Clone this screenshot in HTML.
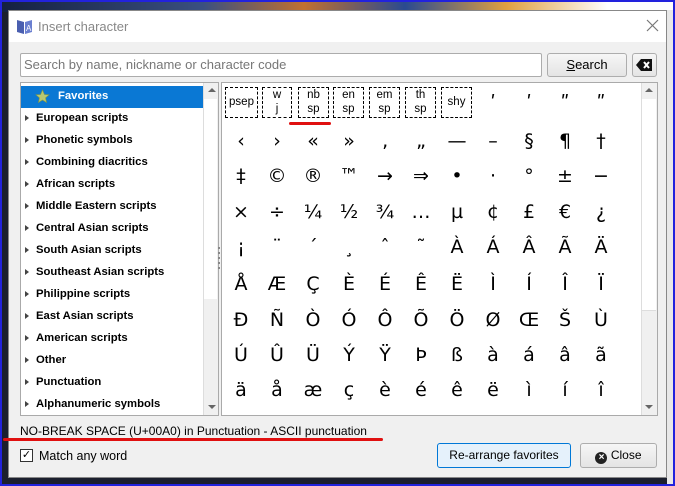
<!DOCTYPE html>
<html><head><meta charset="utf-8"><style>
*{box-sizing:border-box;margin:0;padding:0}
body{width:675px;height:486px;overflow:hidden;position:relative;background:#1b1f2e;font-family:"Liberation Sans","DejaVu Sans",sans-serif;font-size:12px;color:#000}
.frame{position:absolute;left:0;top:0;width:675px;height:486px;border:2px solid #2222dd;z-index:10;pointer-events:none}
.wall{position:absolute;left:0;top:0;width:675px;height:12px;background:linear-gradient(90deg,#142040,#3a5080 30%,#c07030 45%,#2a4a90 60%,#e0a040 75%,#ffffff 90%)}
.rightapp{position:absolute;left:667px;top:10px;width:8px;height:476px;background:#e8e8e8}
.dlg{position:absolute;left:8px;top:10px;width:659px;height:468px;background:#f0f0f0;border:1px solid #888}
.title{position:absolute;left:0;top:0;width:657px;height:31px;background:#fff}
.title span{position:absolute;left:29px;top:8px;font-size:13px;color:#888}
.abs{position:absolute}
.inp{left:11px;top:42px;width:522px;height:24px;background:#fff;border:1px solid #acacac;border-radius:2px;color:#777;font-size:13px;padding:3px 3px}
.btn{background:linear-gradient(#f6f6f6,#e4e4e4);border:1px solid #adadad;border-radius:3px;text-align:center;font-size:12px}
.list{left:11px;top:71px;width:199px;height:334px;background:#fff;border:1px solid #aaa}
.li{position:absolute;left:15px;font-weight:bold;font-size:11.3px}
.tri{position:absolute;left:4px;width:0;height:0;border-left:4px solid #444;border-top:3.5px solid transparent;border-bottom:3.5px solid transparent}
.sb{background:#f0f0f0;border-left:1px solid #ddd}
.grid{left:212px;top:71px;width:437px;height:334px;background:#fff;border:1px solid #aaa}
.c{position:absolute;width:36px;text-align:center;font-family:"DejaVu Sans","Liberation Sans",sans-serif;font-size:19px;line-height:20px}
.bx{position:absolute;border:1px dashed #000;font-size:11.5px;text-align:center;line-height:14px;font-family:"Liberation Sans",sans-serif}
</style></head><body>
<div class="wall"></div>
<div class="rightapp"></div>
<div class="dlg">
 <div class="title">
  <svg class="abs" style="left:7px;top:7px" width="17" height="17" viewBox="0 0 17 17"><path d="M1 2 L8 4 L8 16 L1 14Z" fill="#4a5fb0"/><path d="M9 4 L16 2 L16 14 L9 16Z" fill="#6a7fd0"/><text x="10" y="13" font-size="8" fill="#fff" font-family="Liberation Sans">A</text></svg>
  <span>Insert character</span>
  <svg class="abs" style="left:637px;top:8px" width="13" height="13"><path d="M1 1L12 12M12 1L1 12" stroke="#777" stroke-width="1.2"/></svg>
 </div>
 <div class="abs inp">Search by name, nickname or character code</div>
 <div class="abs btn" style="left:538px;top:42px;width:80px;height:24px;line-height:22px;font-size:13px"><u>S</u>earch</div>
 <div class="abs btn" style="left:623px;top:42px;width:25px;height:24px"><svg width="17" height="12" style="margin-top:5px" viewBox="0 0 17 12"><path d="M5 0H16V12H5L0 6Z" fill="#111"/><path d="M8 3L13 9M13 3L8 9" stroke="#fff" stroke-width="2"/></svg></div>
 <div class="abs list">
  <div class="abs" style="left:0;top:3px;width:182px;height:22px;background:#0a78d4"></div>
  <svg class="abs" style="left:14px;top:6px" width="15" height="15" viewBox="0 0 15 15"><path d="M7.5 1L9.4 5.5L14 5.8L10.5 8.9L11.6 13.5L7.5 11L3.4 13.5L4.5 8.9L1 5.8L5.6 5.5Z" fill="#b8c870" stroke="#8a9a40" stroke-width=".6"/></svg>
  <div class="li" style="left:37px;top:7px;color:#fff">Favorites</div>
  <div class="tri" style="top:32px"></div><div class="li" style="top:29px">European scripts</div>
  <div class="tri" style="top:54px"></div><div class="li" style="top:51px">Phonetic symbols</div>
  <div class="tri" style="top:76px"></div><div class="li" style="top:73px">Combining diacritics</div>
  <div class="tri" style="top:98px"></div><div class="li" style="top:95px">African scripts</div>
  <div class="tri" style="top:120px"></div><div class="li" style="top:117px">Middle Eastern scripts</div>
  <div class="tri" style="top:142px"></div><div class="li" style="top:139px">Central Asian scripts</div>
  <div class="tri" style="top:164px"></div><div class="li" style="top:161px">South Asian scripts</div>
  <div class="tri" style="top:186px"></div><div class="li" style="top:183px">Southeast Asian scripts</div>
  <div class="tri" style="top:208px"></div><div class="li" style="top:205px">Philippine scripts</div>
  <div class="tri" style="top:230px"></div><div class="li" style="top:227px">East Asian scripts</div>
  <div class="tri" style="top:252px"></div><div class="li" style="top:249px">American scripts</div>
  <div class="tri" style="top:274px"></div><div class="li" style="top:271px">Other</div>
  <div class="tri" style="top:296px"></div><div class="li" style="top:293px">Punctuation</div>
  <div class="tri" style="top:318px"></div><div class="li" style="top:315px">Alphanumeric symbols</div>
  <div class="abs sb" style="left:182px;top:0;width:15px;height:332px"></div>
  <div class="abs" style="left:183px;top:16px;width:13px;height:200px;background:#fff"></div>
  <div class="abs" style="left:187px;top:5px;border-left:4px solid transparent;border-right:4px solid transparent;border-bottom:4px solid #666"></div>
  <div class="abs" style="left:187px;top:322px;border-left:4px solid transparent;border-right:4px solid transparent;border-top:4px solid #666"></div>
 </div>
 <div class="abs" style="left:209px;top:236px;width:2px;height:22px;background:repeating-linear-gradient(#888 0 2px,transparent 2px 5px)"></div>
 <div class="abs grid">
  <div class="bx" style="left:3px;top:4px;width:33px;height:31px;line-height:29px">psep</div>
  <div class="bx" style="left:40px;top:4px;width:30px;height:31px">w<br>j</div>
  <div class="bx" style="left:76px;top:4px;width:31px;height:31px">nb<br>sp</div>
  <div class="bx" style="left:111px;top:4px;width:31px;height:31px">en<br>sp</div>
  <div class="bx" style="left:147px;top:4px;width:31px;height:31px">em<br>sp</div>
  <div class="bx" style="left:183px;top:4px;width:31px;height:31px">th<br>sp</div>
  <div class="bx" style="left:219px;top:4px;width:31px;height:31px;line-height:29px">shy</div>
  <div id="g"></div>
  <div class="abs sb" style="left:419px;top:0;width:16px;height:332px"></div>
  <div class="abs" style="left:420px;top:16px;width:14px;height:212px;background:#fff;border-bottom:1px solid #ddd"></div>
  <div class="abs" style="left:423px;top:5px;border-left:4px solid transparent;border-right:4px solid transparent;border-bottom:4px solid #666"></div>
  <div class="abs" style="left:423px;top:322px;border-left:4px solid transparent;border-right:4px solid transparent;border-top:4px solid #666"></div>
 </div>
 <div class="abs" style="left:11px;top:413px;font-size:12px">NO-BREAK SPACE (U+00A0) in Punctuation - ASCII punctuation</div>
 <div class="abs" style="left:11px;top:438px;width:13px;height:13px;border:1px solid #333;background:#fff;font-size:11px;line-height:11px;text-align:center;font-weight:bold">✓</div>
 <div class="abs" style="left:30px;top:438px;font-size:12.5px">Match any word</div>
 <div class="abs btn" style="left:428px;top:432px;width:134px;height:25px;line-height:23px;background:#e5f1fb;border-color:#0078d7">Re-arrange favorites</div>
 <div class="abs btn" style="left:571px;top:432px;width:77px;height:25px;line-height:23px"><span style="display:inline-block;width:12px;height:12px;border-radius:50%;background:#222;color:#fff;font-size:10px;line-height:12px;vertical-align:-1px;font-weight:bold">×</span> Close</div>
</div>
<div class="abs" style="left:289px;top:122px;width:42px;height:3px;background:#e01010;border-radius:2px"></div>
<div class="abs" style="left:3px;top:438px;width:380px;height:3px;background:#e01010;border-radius:2px"></div>
<div class="frame"></div>
<script>
var rows=[
["","","","","","","","ʹ","ʹ","ʺ","ʺ"],
["‹","›","«","»","‚","„","—","–","§","¶","†"],
["‡","©","®","™","→","⇒","•","·","°","±","−"],
["×","÷","¼","½","¾","…","µ","¢","£","€","¿"],
["¡","¨","´","¸","ˆ","˜","À","Á","Â","Ã","Ä"],
["Å","Æ","Ç","È","É","Ê","Ë","Ì","Í","Î","Ï"],
["Đ","Ñ","Ò","Ó","Ô","Õ","Ö","Ø","Œ","Š","Ù"],
["Ú","Û","Ü","Ý","Ÿ","Þ","ß","à","á","â","ã"],
["ä","å","æ","ç","è","é","ê","ë","ì","í","î"]];
var h="";
rows.forEach(function(r,i){r.forEach(function(ch,j){if(!ch)return;
var t=[20,58,93,129,164,201,237,272,307][i];
h+='<div class="c" style="left:'+(1+j*36)+'px;top:'+(t-10)+'px">'+ch+'</div>';});});
document.getElementById("g").innerHTML=h;
</script>
</body></html>
